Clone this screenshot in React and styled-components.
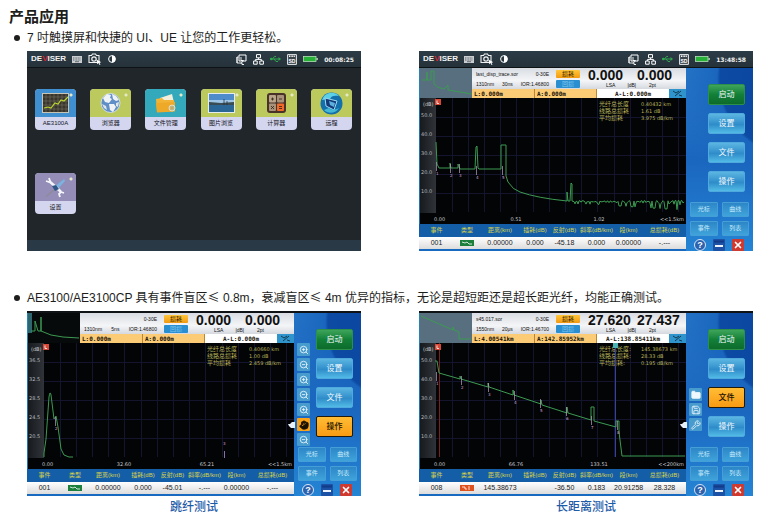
import styled, { createGlobalStyle, css } from "styled-components";
import {
  Folder,
  Hand,
  Save,
  Wrench,
  X,
  ZoomIn,
  ZoomOut,
} from "lucide-react";

const GlobalStyle = createGlobalStyle`
  * {
    box-sizing: border-box;
  }
  body {
    margin: 0;
    background: #ffffff;
    color: #1d1d1b;
    font-family: "Liberation Sans", "Noto Sans CJK SC", sans-serif;
  }
  button {
    font-family: inherit;
    margin: 0;
    padding: 0;
    border: none;
  }
`;

const Page = styled.main`
  padding: 6px 0 0;
`;

const PageTitle = styled.h1`
  margin: 0 0 0 9px;
  font-size: 15px;
  line-height: 22px;
  font-weight: 700;
`;

const FeatureList = styled.ul`
  display: flex;
  flex-direction: column;
  gap: 36px;
  list-style: none;
  margin: 0;
  padding: 0 20px 0 27px;
`;

const Feature = styled.li`
  margin: 0;
`;

const FeatureText = styled.p`
  margin: 0 0 3px -13px;
  font-size: 12px;
  line-height: 20px;
  white-space: nowrap;
  &::before {
    content: "";
    display: inline-block;
    width: 6px;
    height: 6px;
    margin-right: 7px;
    border-radius: 50%;
    background: #1d1d1b;
    vertical-align: 1px;
  }
`;

const WideSign = styled.span`
  font-family: "Noto Sans CJK SC", sans-serif;
`;

const Shots = styled.div`
  display: grid;
  grid-template-columns: 1fr 1fr;
  gap: 58px;
`;

const Shot = styled.figure`
  display: flex;
  flex-direction: column;
  margin: 0;
`;

const Caption = styled.figcaption`
  color: #1f5ca8;
  font-size: 12px;
  font-weight: 500;
  line-height: 22px;
  text-align: center;
`;

const TopBarRow = styled.header`
  display: flex;
  align-items: center;
  justify-content: space-between;
  height: 17px;
  padding: 0 7px 0 4px;
  border-bottom: 1px solid #0d1214;
  background: linear-gradient(#2c3c46, #26323a);
  color: #f2f2f2;
  svg {
    display: block;
  }
`;

const BarGroup = styled.div`
  display: flex;
  align-items: center;
  gap: 6px;
`;

const Brand = styled.strong`
  font-size: 8px;
  line-height: 10px;
  em {
    color: #d8232a;
    font-style: normal;
  }
`;

const Clock = styled.time`
  font-family: "DejaVu Sans", sans-serif;
  font-size: 6px;
  font-weight: 700;
`;

const Desktop = styled.div`
  display: flex;
  flex-direction: column;
  flex: 1;
  background: #202629;
`;

const TileGrid = styled.div`
  display: grid;
  grid-template-columns: repeat(6, 41px);
  justify-content: space-between;
  row-gap: 43px;
  flex: 1;
  align-content: start;
  padding: 21px 9px 26px 8px;
`;

const Tile = styled.button`
  display: flex;
  flex-direction: column;
  height: 41px;
  border-radius: 4px;
  overflow: hidden;
  background: #d3d6ee;
  color: #14141e;
  font-size: 6px;
  line-height: 13px;
`;

const TileArt = styled.span`
  display: flex;
  justify-content: center;
  align-items: center;
  width: 100%;
  height: 28px;
  background:
    radial-gradient(circle at 36px 6px, #e4e9c8 0, #e4e9c8 1px, transparent 2px),
    ${(props) => props.$color};
  svg {
    display: block;
  }
`;

const TileName = styled.span`
  width: 100%;
  text-align: center;
`;

const DesktopFooter = styled.div`
  height: 11px;
  background: #293945;
`;

const Instrument = styled.div`
  display: grid;
  grid-template-columns: 1fr 67px;
  flex: 1;
  background: #176ac0;
  border-top: ${(props) => (props.$bezel ? "2px solid #101316" : "none")};
`;

const Main = styled.div`
  display: flex;
  flex-direction: column;
  min-width: 0;
`;

const Summary = styled.div`
  display: grid;
  grid-template-columns: 53px 1fr;
  height: 30px;
`;

const Thumb = styled.div`
  background: ${(props) => (props.$dark ? "#070a0b" : "#586f7f")};
  border-left: 1px solid #2784b5;
  svg {
    display: block;
  }
`;

const SummaryBody = styled.div`
  display: flex;
  flex-direction: column;
`;

const SummaryTop = styled.div`
  display: flex;
  height: 21px;
  background: linear-gradient(#d8dce2, #f4f5f7 60%, #d5d9df);
  color: #111;
`;

const FileInfo = styled.div`
  display: flex;
  flex-direction: column;
  justify-content: space-between;
  width: 80px;
  padding: 3px 3px 1px 4px;
  font-size: 5px;
  line-height: 7px;
  white-space: nowrap;
`;

const InfoLine = styled.div`
  display: flex;
  justify-content: space-between;
`;

const Modes = styled.div`
  display: flex;
  flex-direction: column;
  gap: 2px;
  width: 24px;
  margin: 2px 8px 0 4px;
`;

const ModeButton = styled.button`
  height: 8px;
  border-radius: 1px;
  font-size: 6px;
  line-height: 8px;
  color: ${(props) => (props.$active ? "#2b1c00" : "#7fc6ee")};
  background: ${(props) =>
    props.$active ? "linear-gradient(#ffc63a, #f39a10)" : "#2a8fd0"};
`;

const Readout = styled.div`
  width: 49px;
  text-align: left;
  strong {
    display: block;
    font-size: 14px;
    line-height: 15px;
  }
  small {
    display: flex;
    gap: 12px;
    padding-left: ${(props) => (props.$first ? "18px" : "12px")};
    font-size: 5px;
    line-height: 5px;
    white-space: nowrap;
  }
`;

const CursorRow = styled.div`
  display: grid;
  grid-template-columns: 63px 62px 1fr 17px;
  height: 9px;
  color: #17130a;
  font-family: "DejaVu Sans Mono", monospace;
  font-size: 6px;
  font-weight: 700;
  line-height: 9px;
  white-space: nowrap;
`;

const CursorCell = styled.span`
  padding-left: 2px;
  border-right: 1px solid #b98733;
  background: #fbcb76;
`;

const DeltaCell = styled.span`
  background: #ffffff;
  text-align: center;
`;

const CursorTool = styled.span`
  display: flex;
  align-items: center;
  justify-content: center;
  background: #2f94cb;
`;

const ChartSvg = styled.svg`
  display: block;
  width: 100%;
  height: auto;
  background: #030405;
  font-family: "DejaVu Sans", "Noto Sans CJK SC", sans-serif;
`;

const EventTable = styled.table`
  width: 100%;
  table-layout: fixed;
  border-collapse: collapse;
  white-space: nowrap;
  th,
  td {
    padding: 0;
    text-align: center;
  }
  th {
    height: 13px;
    background: #145ea8;
    color: #d9d24a;
    font-size: 6px;
    font-weight: 400;
    line-height: 13px;
  }
  td {
    height: 12px;
    background: linear-gradient(#ffffff, #dcdcdc);
    color: #222;
    font-size: 7px;
    line-height: 12px;
  }
  td svg {
    display: block;
    margin: auto;
  }
`;

const Side = styled.aside`
  position: relative;
  display: flex;
  flex-direction: column;
  background: radial-gradient(
      circle at 110px 10px,
      #0b459c 0,
      #0c4aa4 76px,
      #1a66be 79px,
      transparent 130px
    ),
    linear-gradient(#2a7bcb, #1a66bf 50%, #2584d4);
`;

const MainKeys = styled.div`
  display: flex;
  flex-direction: column;
  gap: 8px;
  padding: 16px 8px 10px 22px;
`;

const keyTone = {
  green: "linear-gradient(#3ea55a, #138038 50%, #0d6b2c)",
  blue: "linear-gradient(#5cb6e2, #2f8cc9 55%, #52bbe6)",
  orange: "linear-gradient(#ffbd35, #f99b13)",
};

const Key = styled.button`
  height: 21px;
  border: 1px solid #4fa9dc;
  border-radius: 2px;
  background: ${(props) => keyTone[props.$tone]};
  color: #f2faff;
  font-size: 8px;
  line-height: 19px;
  ${(props) =>
    props.$tone === "green" &&
    css`
      border-color: #2c8f4a;
    `}
  ${(props) =>
    props.$tone === "orange" &&
    css`
      border-color: #221a08;
      color: #1a1200;
      font-weight: 500;
    `}
`;

const SmallKeys = styled.div`
  display: grid;
  grid-template-columns: 1fr 1fr;
  gap: 4px;
  padding: 0 4px 3px;
`;

const SmallKey = styled.button`
  height: 15px;
  border: 1px solid #459fd6;
  border-radius: 1px;
  background: linear-gradient(#2d86c7, #3fa3da);
  color: #c9ecfb;
  font-size: 6px;
  line-height: 13px;
`;

const SystemKeys = styled.div`
  display: flex;
  justify-content: space-between;
  padding: 0 9px 0 8px;
`;

const SystemKey = styled.button`
  display: flex;
  align-items: center;
  justify-content: center;
  width: 12px;
  height: 12px;
  border: ${(props) => (props.$round ? "1px solid #d6e6f6" : "none")};
  border-radius: ${(props) => (props.$round ? "50%" : "1px")};
  background: ${(props) => props.$color};
  color: #fff;
  font-size: 9px;
  font-weight: 700;
  line-height: 10px;
`;

// floats above the chart edge, next to the main keys
const Palette = styled.div`
  position: absolute;
  top: ${(props) => props.$top}px;
  left: 3px;
  display: flex;
  flex-direction: column;
  gap: 2px;
`;

const PaletteKey = styled.button`
  position: relative;
  display: flex;
  align-items: center;
  justify-content: center;
  width: 13px;
  height: 13px;
  border-radius: 1px;
  background: ${(props) => (props.$active ? "#f9a21b" : "#479bcd")};
  color: ${(props) => (props.$active ? "#1a1200" : "#eef8ff")};
`;

const Pointer = styled.span`
  position: absolute;
  top: 4px;
  left: -9px;
  line-height: 0;
`;

const TopBar = ({ time }) => (
  <TopBarRow>
    <BarGroup>
      <Brand>
        DE<em>V</em>ISER
      </Brand>
      <svg width="10" height="7" viewBox="0 0 10 7">
        <rect width="10" height="7" fill="#c9cdd0" />
        <path d="M1 2h8M1 4h8" stroke="#3a464e" strokeDasharray="1 .6" strokeWidth=".8" />
        <path d="M3 5.7h4" stroke="#3a464e" strokeWidth=".7" />
      </svg>
      <svg width="14" height="12" viewBox="0 0 14 12">
        <path d="M1 2.5h2.5l1-1.5h3l1 1.5H11v7H1z" fill="none" stroke="#f2f2f2" strokeWidth="1.1" />
        <circle cx="6" cy="6" r="2.2" fill="none" stroke="#f2f2f2" strokeWidth="1.2" />
        <path d="M8.5 6.5l4.8 2.8-2 .4 1.2 1.8-1 .4-1-1.8-1.3 1.2z" fill="#fff" />
      </svg>
      <svg width="8" height="8" viewBox="0 0 8 8">
        <circle cx="4" cy="4" r="3.4" fill="none" stroke="#fff" strokeWidth="1" />
        <path d="M4 .6a3.4 3.4 0 0 1 0 6.8z" fill="#fff" />
      </svg>
    </BarGroup>
    <BarGroup>
      <svg width="11" height="11" viewBox="0 0 11 11">
        <path d="M3 1h7v6H3z" fill="none" stroke="#fff" />
        <path d="M1 3v6h5v1.5h2M1 9V3h1.5M5 3v3.5h2.5L5 9.5" fill="none" stroke="#fff" strokeWidth=".9" />
      </svg>
      <svg width="11" height="11" viewBox="0 0 11 11">
        <path d="M3.5.6h4v3.2h-4zM.6 7h3.6v3.2H.6zM6.8 7h3.6v3.2H6.8z" fill="none" stroke="#fff" strokeWidth="1" />
        <path d="M5.5 4v1.5M2.4 7V5.5h6.2V7" fill="none" stroke="#fff" strokeWidth=".9" />
      </svg>
      <svg width="11" height="8" viewBox="0 0 11 8">
        <path d="M0 4h9M2.5 4L4.5 1.5H6M4 4l2 2.5h2" fill="none" stroke="#2fa84f" strokeWidth="1" />
        <path d="M8.5 2L11 4 8.5 6z" fill="#2fa84f" />
        <circle cx="1.3" cy="4" r="1.3" fill="#2fa84f" />
      </svg>
      <svg width="10" height="11" viewBox="0 0 10 11">
        <path d="M.6.6h8.8v9.8H.6z" fill="#39444b" stroke="#fff" strokeWidth=".9" />
        <path d="M2 2.2h6" stroke="#fff" strokeWidth="1.6" strokeDasharray="1 .6" />
        <text x="5" y="9" fill="#fff" fontSize="5" fontWeight="700" textAnchor="middle">
          SD
        </text>
      </svg>
      <svg width="15" height="6" viewBox="0 0 15 6">
        <rect x=".5" y=".5" width="12.5" height="5" fill="#27b237" stroke="#b5dfb8" strokeWidth=".8" />
        <rect x="13.4" y="2" width="1.4" height="2" fill="#b5dfb8" />
      </svg>
      <Clock>{time}</Clock>
    </BarGroup>
  </TopBarRow>
);

const ChartArt = () => (
  <svg width="27" height="20" viewBox="0 0 27 20">
    <rect x=".5" y=".5" width="26" height="19" fill="#39352d" stroke="#c8c4b4" />
    <path
      d="M4 1v18M8 1v18M12 1v18M16 1v18M20 1v18M24 1v18M1 4h25M1 8h25M1 12h25M1 16h25"
      stroke="#81796a"
      strokeWidth=".5"
    />
    <path d="M2 15l4-1 3 1 4-5 3 1 3-4 3 1 4-4" fill="none" stroke="#b9d531" strokeWidth="1.2" />
  </svg>
);

const GlobeArt = () => (
  <svg width="21" height="22" viewBox="0 0 21 22">
    <circle cx="10.5" cy="11" r="9.5" fill="#5f8fc6" stroke="#dfe8f4" strokeWidth=".8" />
    <path d="M3 6l4-4 4 1-1 3 2 1-3 4-4-1zM12 2l4 2 3 4-3 1-3-2zM9 12l5 0 2 3-3 5-3-2z" fill="#f0f3f6" />
    <path d="M2 12l4 2 1 4-3-2zM16 11l3-1-1 5-2-1z" fill="#dde5ea" />
  </svg>
);

const FilesArt = () => (
  <svg width="22" height="22" viewBox="0 0 22 22">
    <path d="M5 6l12-4 3 13-12 3z" fill="#f3eddb" />
    <path d="M1 7l6-1 2 2h10l1 11-18 1z" fill="#f2b437" />
    <path d="M1 11l19-1v9.5L2 20.500z" fill="#efa928" />
    <circle cx="17" cy="16" r="3" fill="#b9b68f" stroke="#e7dfc0" />
    <circle cx="17" cy="16" r="1" fill="#e0a02e" />
  </svg>
);

const PictureArt = () => (
  <svg width="27" height="20" viewBox="0 0 27 20">
    <rect x=".5" y=".5" width="26" height="19" fill="#9fc6e6" stroke="#e5ebee" />
    <path d="M1 1h25v6H1z" fill="#4f8ccb" />
    <path d="M1 9l12 1 13-1v3H1z" fill="#3a4d54" />
    <path d="M1 12h25v7H1z" fill="#2a6696" />
    <path d="M16 6v6M19 8v4" stroke="#1d2a33" strokeWidth=".7" />
  </svg>
);

const CalcArt = () => (
  <svg width="19" height="20" viewBox="0 0 19 20">
    <rect width="19" height="20" rx="3" fill="#493328" />
    <rect x="2" y="2" width="7" height="7.5" rx="1" fill="#b8a489" />
    <rect x="10" y="2" width="7" height="7.5" rx="1" fill="#a8927a" />
    <rect x="2" y="10.5" width="7" height="7.5" rx="1" fill="#a8927a" />
    <rect x="10" y="10.5" width="7" height="7.5" rx="1" fill="#f06b2a" />
    <path d="M4 6h3M5.5 4.5v3M12 6h3M4 13l3 3M7 13l-3 3M12 13.5h3M12 15.5h3" stroke="#2e1e16" strokeWidth=".8" />
  </svg>
);

const RemoteArt = () => (
  <svg width="23" height="23" viewBox="0 0 23 23">
    <circle cx="11.5" cy="11.5" r="11" fill="#1470ad" />
    <path d="M2 8a10 10 0 0 1 17-4c-5-1-8 0-9 3z" fill="#5bd0e6" />
    <path d="M5 6l12 3-3 9-8-4z" fill="#143a78" stroke="#9bdcf2" />
    <path d="M9 9l6 2-1 4-4-2z" fill="#5db0dd" />
    <path d="M4 18c4 4 11 4 15-2-4 2-8 2-10 0z" fill="#43b8d4" />
  </svg>
);

const ToolsArt = () => (
  <svg width="21" height="21" viewBox="0 0 21 21">
    <path d="M19 2l1 2-8 9-3-3z" fill="#7bb2df" />
    <path d="M10 12L1 19.5" stroke="#8f8a94" strokeWidth="1.2" />
    <path d="M4 4l8 7 4 4" fill="none" stroke="#f3f5fa" strokeWidth="2.5" />
    <path d="M1 4l3 1 1-1-1-3M19 16l-3-1-2 2 1 3" fill="none" stroke="#f3f5fa" strokeWidth="1.8" />
    <path d="M7 9l4-1 3 4-4 2z" fill="#2f5687" />
  </svg>
);

const tiles = [
  { name: "AE3100A", color: "#3f8fd1", Art: ChartArt },
  { name: "浏览器", color: "#bcc95c", Art: GlobeArt },
  { name: "文件管理", color: "#34a9bb", Art: FilesArt },
  { name: "图片浏览", color: "#bcc95c", Art: PictureArt },
  { name: "计算器", color: "#bcc95c", Art: CalcArt },
  { name: "远程", color: "#bcc95c", Art: RemoteArt },
  { name: "设置", color: "#938db8", Art: ToolsArt },
];

const HomeScreen = () => (
  <Shot>
    <TopBar time="00:08:25" />
    <Desktop>
      <TileGrid>
        {tiles.map(({ name, color, Art }) => (
          <Tile key={name} type="button">
            <TileArt $color={color}>
              <Art />
            </TileArt>
            <TileName>{name}</TileName>
          </Tile>
        ))}
      </TileGrid>
      <DesktopFooter />
    </Desktop>
  </Shot>
);

const noise = () => {
  let path = "";
  for (let x = 154; x <= 265; x += 1) {
    const wave = Math.sin(x * x * 7.3);
    const spread = x < 200 ? 1 : 1.5 + (x - 200) / 50;
    const dip = wave > 0.6 ? spread * 2.4 : wave * spread;
    path += ` L${x} ${(103.5 + (x - 154) / 60 + dip).toFixed(1)}`;
  }
  return path;
};

const Chart = ({ yLabels, xLabels, stats, children }) => (
  <ChartSvg viewBox="0 0 267 126">
    <defs>
      <linearGradient id="axis" x1="0" x2="1" y1="0" y2="0">
        <stop offset="0" stopColor="#15191c" />
        <stop offset="1" stopColor="#30343a" />
      </linearGradient>
    </defs>
    <rect width="17" height="115" fill="url(#axis)" />
    <path d="M.5 0V126" stroke="#1f74b4" />
    {Array.from({ length: 15 }, (_, i) => (
      <path key={i} d={`M${Math.floor(33 + i * 16.2) + 0.5} 0V114`} stroke="#14142f" />
    ))}
    {yLabels.map((label, i) => (
      <g key={label}>
        <path d={`M17 ${19.5 + i * 19}H267`} stroke="#14142f" />
        <text x="2" y={19 + i * 19} fill="#b7bbbe" fontSize="5">
          {label}
        </text>
      </g>
    ))}
    <text x="4" y="8" fill="#c9cccf" fontSize="5">
      (dB)
    </text>
    {xLabels.map((label, i) => (
      <text
        key={label}
        x={[15, 97, 180, 265][i]}
        y="123"
        fill="#c5c9cc"
        fontSize="5"
        textAnchor={["start", "middle", "middle", "end"][i]}
      >
        {label}
      </text>
    ))}
    {stats.map(([label, value], i) => (
      <g key={label} fill="#b9b45c">
        <text x="180" y={8 + i * 7} fontSize="6">
          {label}
        </text>
        <text x="222" y={8 + i * 7} fontSize="5">
          {value}
        </text>
      </g>
    ))}
    {children}
    <rect x="16" y="1" width="6" height="6" fill="#d94836" />
    <path d="M18 2.5v3h2" fill="none" stroke="#fff" strokeWidth=".8" />
  </ChartSvg>
);

const Trace = styled.path`
  fill: none;
  stroke: #3c9a52;
  stroke-width: 1;
`;

const Mark = ({ x, y, label }) => (
  <g>
    <path d={`M${x + 0.5} ${y}v9`} stroke="#b9a2bd" strokeWidth=".7" />
    <text x={x} y={y + 13} fill="#d5a6d8" fontSize="4">
      {label}
    </text>
  </g>
);

const columns = [
  ["事件", 35],
  ["类型", 26],
  ["距离(km)", 40],
  ["插耗(dB)", 30],
  ["反射(dB)", 29],
  ["斜率(dB/km)", 35],
  ["段(km)", 29],
  ["总损耗(dB)", 43],
];

const EventType = ({ end }) => (
  <svg width="14" height="6" viewBox="0 0 14 6">
    <rect width="14" height="6" fill={end ? "#e0521d" : "#1c7f3c"} />
    <path
      d={end ? "M2 2h3v2h2M9 1v4" : "M2 2l3 1 2-1 2 2h3"}
      fill="none"
      stroke="#fff"
      strokeWidth=".8"
    />
  </svg>
);

const toolIcons = {
  zoomIn: ZoomIn,
  zoomOut: ZoomOut,
  hand: Hand,
  folder: Folder,
  save: Save,
  wrench: Wrench,
};

const OtdrScreen = ({
  time,
  caption,
  thumb,
  darkThumb,
  file,
  pulse,
  wave,
  ior,
  readouts,
  cursors,
  row,
  endEvent,
  activeKey,
  tools = [],
  toolsTop,
  children,
}) => (
  <Shot>
    {time && <TopBar time={time} />}
    <Instrument $bezel={!time}>
      <Main>
        <Summary>
          <Thumb $dark={darkThumb}>
            <svg width="52" height="30" viewBox="0 0 52 30">
              {darkThumb && <rect width="4" height="20" fill="#2e666f" />}
              <Trace d={thumb} />
            </svg>
          </Thumb>
          <SummaryBody>
            <SummaryTop>
              <FileInfo>
                <InfoLine>
                  <span>{file}</span>
                  <span>0-30E</span>
                </InfoLine>
                <InfoLine>
                  <span>{wave}</span>
                  <span>{pulse}</span>
                  <span>{ior}</span>
                </InfoLine>
              </FileInfo>
              <Modes>
                <ModeButton type="button" $active>
                  损耗
                </ModeButton>
                <ModeButton type="button">回损</ModeButton>
              </Modes>
              <Readout $first>
                <strong>{readouts[0]}</strong>
                <small>
                  <span>LSA</span>
                  <span>|dB|</span>
                </small>
              </Readout>
              <Readout>
                <strong>{readouts[1]}</strong>
                <small>2pt</small>
              </Readout>
            </SummaryTop>
            <CursorRow>
              <CursorCell>{cursors[0]}</CursorCell>
              <CursorCell>{cursors[1]}</CursorCell>
              <DeltaCell>{cursors[2]}</DeltaCell>
              <CursorTool>
                <svg width="11" height="7" viewBox="0 0 11 7">
                  <path d="M1 1l3 2 3-2M3 6l6-5M7 5l3 1" fill="none" stroke="#12384f" />
                </svg>
              </CursorTool>
            </CursorRow>
          </SummaryBody>
        </Summary>
        {children}
        <EventTable>
          <colgroup>
            {columns.map(([label, width]) => (
              <col key={label} width={width} />
            ))}
          </colgroup>
          <thead>
            <tr>
              {columns.map(([label]) => (
                <th key={label}>{label}</th>
              ))}
            </tr>
          </thead>
          <tbody>
            <tr>
              <td>{row[0]}</td>
              <td>
                <EventType end={endEvent} />
              </td>
              {row.slice(1).map((value, i) => (
                <td key={i}>{value}</td>
              ))}
            </tr>
          </tbody>
        </EventTable>
      </Main>
      <Side>
        <MainKeys>
          {["启动", "设置", "文件", "操作"].map((label, i) => (
            <Key
              key={label}
              type="button"
              $tone={label === activeKey ? "orange" : i === 0 ? "green" : "blue"}
            >
              {label}
            </Key>
          ))}
        </MainKeys>
        <SmallKeys>
          {["光标", "曲线", "事件", "列表"].map((label) => (
            <SmallKey key={label} type="button">
              {label}
            </SmallKey>
          ))}
        </SmallKeys>
        <SystemKeys>
          <SystemKey type="button" $round $color="#2d62ae">
            ?
          </SystemKey>
          <SystemKey type="button" $color="#1c51a6" aria-label="最小化">
            <svg width="10" height="10" viewBox="0 0 10 10">
              <path d="M0 1.5h10" stroke="#123a86" strokeWidth="2" />
              <path d="M1 6h8" stroke="#eef4fb" strokeWidth="2" />
            </svg>
          </SystemKey>
          <SystemKey type="button" $color="#cf3a30" aria-label="关闭">
            <X size={10} strokeWidth={4} />
          </SystemKey>
        </SystemKeys>
        {tools.length > 0 && (
          <Palette $top={toolsTop}>
            {tools.map(({ icon, active, pointer }, i) => {
              const Icon = toolIcons[icon];
              return (
                <PaletteKey key={i} type="button" $active={active} aria-label={icon}>
                  <Icon size={10} fill={active || icon === "folder" ? "currentColor" : "none"} />
                  {pointer && (
                    <Pointer>
                      <svg width="7" height="6" viewBox="0 0 7 6">
                        <path d="M0 2h2l2-2h3v6H3L1 4z" fill="#e8f1f8" />
                      </svg>
                    </Pointer>
                  )}
                </PaletteKey>
              );
            })}
          </Palette>
        )}
      </Side>
    </Instrument>
    {caption && <Caption>{caption}</Caption>}
  </Shot>
);

const App = () => {
  return (
    <>
      <GlobalStyle />
      <Page>
        <PageTitle>产品应用</PageTitle>
        <FeatureList>
          <Feature>
            <FeatureText>7 吋触摸屏和快捷的 UI、UE 让您的工作更轻松。</FeatureText>
            <Shots>
              <HomeScreen />
              <OtdrScreen
                time="13:48:58"
                thumb="M2 12h5V4v8h4V3h3v13q3 4 10 5l4-4v5l24 4"
                file="last_disp_trace.sor"
                wave="1310nm"
                pulse="30ns"
                ior="IOR:1.46800"
                readouts={["0.000", "0.000"]}
                cursors={["L:0.000m", "A:0.000m", "A-L:0.000m"]}
                row={["001", "0.00000", "0.000", "-45.18", "0.000", "0.00000", "-.---"]}
              >
                <Chart
                  yLabels={["50.0", "40.0", "30.0", "20.0", "10.0"]}
                  xLabels={["0.00", "0.51", "1.02", "<<1.5km"]}
                  stats={[
                    ["光纤总长度", "0.40432 km"],
                    ["线路总损耗", "1.61 dB"],
                    ["平均损耗", "3.975 dB/km"],
                  ]}
                >
                  <Trace
                    d={`M17 44L18 66L20 70H31V65L32 70H39V66L41 71H56L57 49L58 48L59 70L60 71H82V47H87V78L89 84Q94 92 101 94Q118 100 148 103V94L149 103H151L152 85L153 86V103${noise()}`}
                  />
                  <Mark x={17} y={64} label="1" />
                  <Mark x={31} y={66} label="2" />
                  <Mark x={40} y={66} label="3" />
                  <Mark x={57} y={68} label="4" />
                  <Mark x={83} y={68} label="5" />
                </Chart>
              </OtdrScreen>
            </Shots>
          </Feature>
          <Feature>
            <FeatureText>
              AE3100/AE3100CP 具有事件盲区<WideSign>≤</WideSign> 0.8m，衰减盲区
              <WideSign>≤</WideSign> 4m 优异的指标，无论是超短距还是超长距光纤，均能正确测试。
            </FeatureText>
            <Shots>
              <OtdrScreen
                caption="跳纤测试"
                darkThumb
                thumb="M3 18h4V8l3 10h3V4v14l10 4 12 2 16 1"
                wave="1310nm"
                pulse="5ns"
                ior="IOR:1.46800"
                readouts={["0.000", "0.000"]}
                cursors={["L:0.000m", "A:0.000m", "A-L:0.000m"]}
                row={["001", "0.00000", "0.000", "-45.01", "-.---", "0.00000", "-.---"]}
                activeKey="操作"
                toolsTop={30}
                tools={[
                  { icon: "zoomIn" },
                  { icon: "zoomOut" },
                  { icon: "zoomIn" },
                  { icon: "zoomOut" },
                  { icon: "zoomIn" },
                  { icon: "hand", active: true, pointer: true },
                  { icon: "zoomOut" },
                ]}
              >
                <Chart
                  yLabels={["36.5", "32.5", "28.5", "24.5", "20.5"]}
                  xLabels={["0.00", "32.60", "65.21", "<<1.5km"]}
                  stats={[
                    ["光纤总长度", "0.40660 km"],
                    ["线路总损耗", "1.00 dB"],
                    ["平均损耗", "2.459 dB/km"],
                  ]}
                >
                  <Trace d="M17 114V110L19 96L22 54Q23 47 24 52L27 76L29 73L31 84L34 106L37 112L42 114H46" />
                  <Mark x={28} y={74} label="2" />
                  <path d="M197.5 108v7" stroke="#a98bd0" strokeWidth=".8" />
                  <text x="196" y="102" fill="#d5a6d8" fontSize="4">
                    3
                  </text>
                </Chart>
              </OtdrScreen>
              <OtdrScreen
                caption="长距离测试"
                thumb="M1 3L33 17v-3l1 3 5 2v7h12"
                file="s45.017.sor"
                wave="1550nm"
                pulse="20μs"
                ior="IOR:1.46700"
                readouts={["27.620", "27.437"]}
                cursors={["L:4.00541km", "A:142.85952km", "A-L:138.85411km"]}
                row={["008", "145.38673", "", "-36.50", "0.183", "20.91258", "28.328"]}
                endEvent
                activeKey="文件"
                toolsTop={75}
                tools={[
                  { icon: "folder" },
                  { icon: "save" },
                  { icon: "wrench", pointer: true },
                ]}
              >
                <Chart
                  yLabels={["50.0", "40.0", "30.0", "20.0", "10.0"]}
                  xLabels={["0.00", "66.76", "133.51", "<<200km"]}
                  stats={[
                    ["光纤总长度:", "145.38673 km"],
                    ["线路总损耗:", "28.33 dB"],
                    ["平均损耗:", "0.195 dB/km"],
                  ]}
                >
                  <path d="M20.5 0V114" stroke="#7c221d" />
                  <path d="M196.5 0V114" stroke="#33429a" />
                  <rect x="194" y="0" width="5" height="5" fill="#4bb2b5" />
                  <Trace d="M16 18H18L20 30L41 36V33L42 36L69 44V40L70 44L94 52V47L95 52L122 61V57L123 62L148 70V64L149 70L172 77V64H175V78L197 84V78H200V89L203 113H266" />
                  <Mark x={17} y={29} label="1" />
                  <Mark x={42} y={33} label="2" />
                  <Mark x={69} y={40} label="3" />
                  <Mark x={95} y={48} label="4" />
                  <Mark x={121} y={56} label="5" />
                  <Mark x={147} y={64} label="6" />
                  <Mark x={172} y={73} label="7" />
                  <Mark x={198} y={78} label="8" />
                </Chart>
              </OtdrScreen>
            </Shots>
          </Feature>
        </FeatureList>
      </Page>
    </>
  );
};

export default App;
